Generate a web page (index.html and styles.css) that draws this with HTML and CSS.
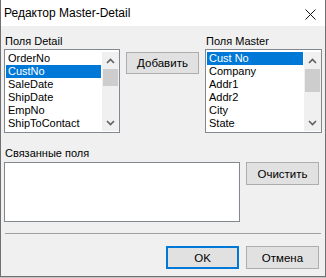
FILE: index.html
```html
<!DOCTYPE html>
<html lang="ru">
<head>
    <meta charset="UTF-8">
    <meta name="viewport" content="width=device-width, initial-scale=1.0">
    <title>Редактор Master-Detail</title>
    <link rel="stylesheet" href="styles.css">
</head>
<body>
    <div class="dialog">
        <div class="titlebar">
            <span class="title">Редактор Master-Detail</span>
            <svg class="close-icon" width="11" height="11" viewBox="0 0 11 11">
                <path d="M0.5 0.5 L10.5 10.5 M10.5 0.5 L0.5 10.5" stroke="#111" stroke-width="1" fill="none"/>
            </svg>
        </div>
        <div class="content">
            <div class="top-row">
                <div class="field-col detail-col">
                    <div class="caption">Поля Detail</div>
                    <div class="listbox">
                        <ul class="items">
                            <li>OrderNo</li>
                            <li class="selected">CustNo</li>
                            <li>SaleDate</li>
                            <li>ShipDate</li>
                            <li>EmpNo</li>
                            <li>ShipToContact</li>
                            <li>ShipToAddr1</li>
                        </ul>
                        <div class="vscroll">
                            <div class="arrow">
                                <svg width="9" height="6" viewBox="0 0 9 6"><polyline points="1,5 4.5,1.5 8,5" stroke="#606060" stroke-width="1.6" fill="none"/></svg>
                            </div>
                            <div class="track"><div class="thumb thumb-detail"></div></div>
                            <div class="arrow">
                                <svg width="9" height="6" viewBox="0 0 9 6"><polyline points="1,1 4.5,4.5 8,1" stroke="#606060" stroke-width="1.6" fill="none"/></svg>
                            </div>
                        </div>
                    </div>
                </div>
                <button class="btn add-btn">Добавить</button>
                <div class="field-col master-col">
                    <div class="caption">Поля Master</div>
                    <div class="listbox">
                        <ul class="items">
                            <li class="selected">Cust No</li>
                            <li>Company</li>
                            <li>Addr1</li>
                            <li>Addr2</li>
                            <li>City</li>
                            <li>State</li>
                            <li>Zip</li>
                        </ul>
                        <div class="vscroll">
                            <div class="arrow">
                                <svg width="9" height="6" viewBox="0 0 9 6"><polyline points="1,5 4.5,1.5 8,5" stroke="#606060" stroke-width="1.6" fill="none"/></svg>
                            </div>
                            <div class="track"><div class="thumb thumb-master"></div></div>
                            <div class="arrow">
                                <svg width="9" height="6" viewBox="0 0 9 6"><polyline points="1,1 4.5,4.5 8,1" stroke="#606060" stroke-width="1.6" fill="none"/></svg>
                            </div>
                        </div>
                    </div>
                </div>
            </div>

            <div class="caption links-caption">Связанные поля</div>
            <div class="links-row">
                <div class="links-box"></div>
                <button class="btn">Очистить</button>
            </div>

            <div class="separator"></div>

            <div class="footer">
                <button class="btn btn-default">OK</button>
                <button class="btn">Отмена</button>
            </div>
        </div>
    </div>
</body>
</html>
```

FILE: styles.css
```css
body {
    margin: 0;
    background-color: #c4c4c4;
    font-family: "Liberation Sans", Arial, sans-serif;
    font-size: 11px;
    color: #000;
}

.dialog {
    width: 326px;
    height: 277px;
    box-sizing: border-box;
    background-color: #f0f0f0;
    border: 1px solid #707070;
    border-top: none;
}

.titlebar {
    height: 26px;
    background-color: #fff;
    display: flex;
    align-items: center;
    justify-content: space-between;
    padding: 0 9px 0 3px;
}

.title {
    font-size: 12px;
    line-height: 15px;
    margin-top: 1px;
}

.close-icon {
    margin-top: 2px;
}

.content {
    padding: 9px 3px 0 3px;
}

.top-row {
    display: flex;
    gap: 6px;
}

.detail-col {
    width: 116px;
}

.master-col {
    width: 117px;
}

.caption {
    line-height: 13px;
    height: 13px;
    margin-bottom: 1px;
    padding-left: 1px;
}

.listbox {
    height: 84px;
    box-sizing: border-box;
    border: 1px solid #828790;
    background-color: #fff;
    padding: 2px 0 1px 1px;
    display: flex;
    gap: 1px;
    overflow: hidden;
}

.items {
    list-style: none;
    margin: 0;
    padding: 0;
    flex: 1;
    overflow: hidden;
}

.items li {
    height: 13px;
    line-height: 13px;
    padding-left: 2px;
    white-space: nowrap;
}

.items li.selected {
    background-color: #0078d7;
    color: #fff;
}

.vscroll {
    width: 17px;
    background-color: #f0f0f0;
    display: flex;
    flex-direction: column;
}

.arrow {
    height: 17px;
    display: flex;
    align-items: center;
    justify-content: center;
}

.track {
    flex: 1;
    padding: 0 1px;
}

.thumb {
    background-color: #cdcdcd;
}

.thumb-detail {
    height: 17px;
}

.thumb-master {
    height: 23px;
}

.btn {
    width: 73px;
    height: 23px;
    box-sizing: border-box;
    background-color: #e1e1e1;
    border: 1px solid #adadad;
    font-family: inherit;
    font-size: 11.5px;
    color: #000;
    padding: 0;
}

.btn-default {
    border: 2px solid #0078d7;
}

.add-btn {
    margin-top: 17px;
    height: 22px;
}

.links-caption {
    margin-top: 14px;
    margin-bottom: 2px;
}

.links-row {
    display: flex;
    gap: 6px;
}

.links-box {
    width: 236px;
    height: 60px;
    box-sizing: border-box;
    border: 1px solid #828790;
    background-color: #fff;
}

.separator {
    height: 1px;
    background-color: #a0a0a0;
    margin: 11px 1px 0 1px;
}

.footer {
    display: flex;
    justify-content: flex-end;
    gap: 7px;
    padding-right: 3px;
    margin-top: 12px;
}
```
